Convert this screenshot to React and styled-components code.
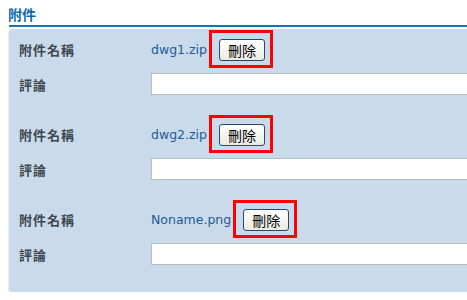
import React from 'react';
import styled, { createGlobalStyle } from 'styled-components';

const GlobalStyle = createGlobalStyle`
  html, body {
    margin: 0;
    padding: 0;
    background: #ffffff;
    overflow: hidden;
  }
`;

const Section = styled.section`
  padding-top: 6px;
  font-family: 'DejaVu Sans', Verdana, sans-serif;
`;

const Header = styled.div`
  margin-left: 9px;
  padding-bottom: 2px;
  border-bottom: 2px solid #1475b6;
`;

const Title = styled.h2`
  margin: 0 0 0 -1px;
  font-family: 'Noto Sans CJK TC', sans-serif;
  font-size: 14px;
  line-height: 17px;
  font-weight: 700;
  color: #0d6aaa;
`;

const Panel = styled.div`
  margin: 2px 0 0 9px;
  padding: 1px 0 27px 10px;
  background: #c9dbea;
  border-radius: 4px 0 0 4px;
  box-shadow: -1px 1px 0 #e6eef5;
`;

const Block = styled.div`
  display: grid;
  grid-template-columns: 132px 1fr;
  grid-template-rows: 38px 22px;
  row-gap: 5px;
  margin-bottom: ${props => (props.last ? '0' : '20px')};
`;

const Label = styled.div`
  align-self: center;
  font-family: 'Noto Sans CJK TC', sans-serif;
  font-size: 13px;
  font-weight: 700;
  letter-spacing: 1px;
  color: #3e464f;
`;

const FileCell = styled.div`
  display: flex;
  align-items: center;
`;

const FileName = styled.span`
  font-size: 12.5px;
  line-height: 15px;
  color: #1e5a96;
`;

const Highlight = styled.span`
  display: inline-flex;
  margin-left: 2px;
  padding: 6px 5px 4px 7px;
  border: 3px solid #ff0000;
`;

const DeleteButton = styled.button`
  width: 46px;
  height: 22px;
  padding: 0;
  border: 1px solid #28486c;
  border-radius: 3px;
  background: linear-gradient(#ffffff, #ebebe3);
  font-family: 'Noto Sans CJK TC', sans-serif;
  font-size: 14px;
  line-height: 18px;
  color: #000;
`;

const CommentInput = styled.input`
  display: block;
  box-sizing: border-box;
  width: 100%;
  height: 22px;
  margin: 0;
  border: 1px solid #b9bdc1;
  border-right: 0;
  background: #ffffff;
`;

const files = ['dwg1.zip', 'dwg2.zip', 'Noname.png'];

export default function App() {
  return (
    <>
      <GlobalStyle />
      <Section>
        <Header>
          <Title>附件</Title>
        </Header>
        <Panel>
          {files.map((name, i) => (
            <Block key={name} last={i === files.length - 1}>
              <Label>附件名稱</Label>
              <FileCell>
                <FileName>{name}</FileName>
                <Highlight>
                  <DeleteButton type="button">刪除</DeleteButton>
                </Highlight>
              </FileCell>
              <Label>評論</Label>
              <CommentInput type="text" />
            </Block>
          ))}
        </Panel>
      </Section>
    </>
  );
}
